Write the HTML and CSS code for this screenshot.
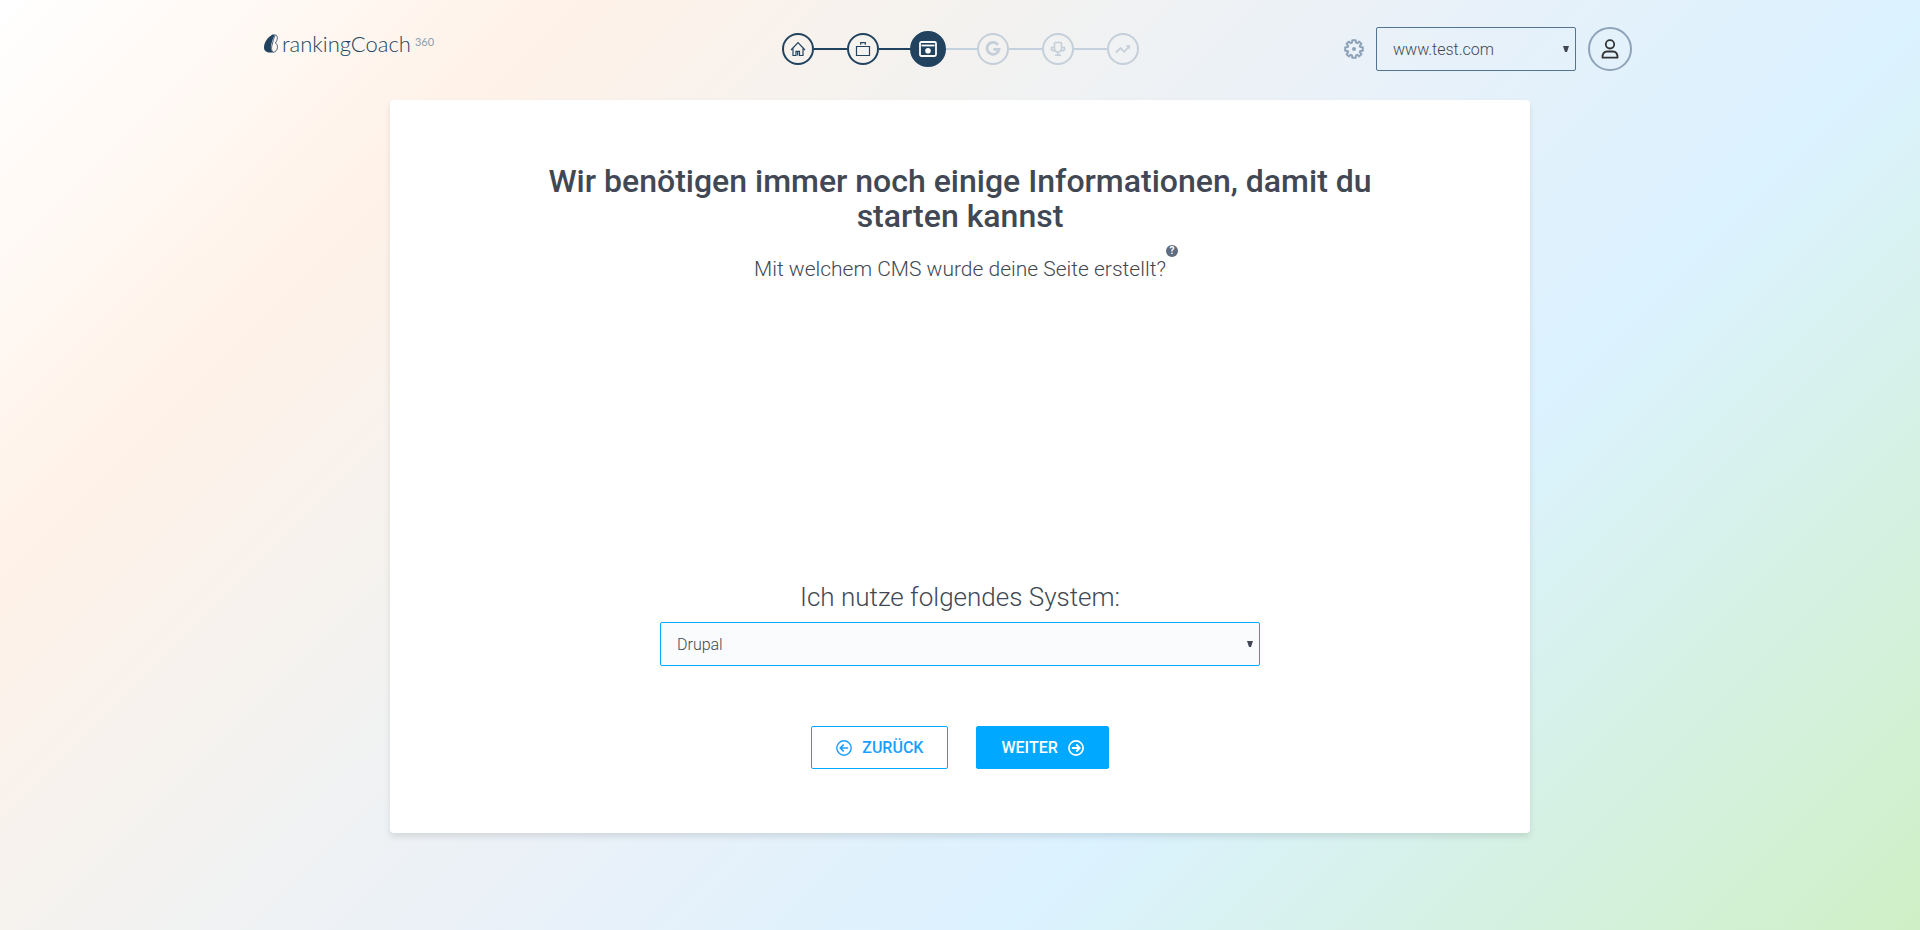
FILE: index.html
```html
<!DOCTYPE html>
<html lang="de">
<head>
<meta charset="utf-8">
<meta name="viewport" content="width=device-width, initial-scale=1">
<title>rankingCoach 360</title>
<link rel="stylesheet" href="styles.css">
</head>
<body>
<header class="header">
  <a class="logo" href="#" aria-label="rankingCoach 360">
    <svg class="logo-mark" viewBox="0 0 14 19" aria-hidden="true">
      <path d="M8.500.5C3.500 3.500 0 8.500 0 13.500 0 17 2.500 18.500 6 18.500h3C6.800 16.500 6.500 13.500 7.300 10.500 8 7.500 9.500 3 11 .5z" fill="#22435f"/>
      <path d="M11.500.8c2.600 1.200 2.400 5-.2 8.200 3.200 1 3.200 8.700-2.300 9.300-2-2-1.600-5.400-.7-8C9 7.500 10 3 11.500.8z" fill="none" stroke="#22435f" stroke-width=".8"/>
    </svg>
    <span class="logo-name">rankingCoach</span><span class="logo-suffix">360</span>
  </a>

  <ol class="steps">
    <li class="step step-done"><a class="step-dot" href="#" aria-label="Website">
      <svg class="step-icon" viewBox="0 0 16 16" fill="none" stroke="currentColor" stroke-width="1.200" aria-hidden="true"><path d="M1 9 8 1.700 15 9M3 7.500V14.500H6V10.300h3.500V14.500H13V7.500M7.700 10.500v4"/></svg></a></li>
    <li class="step step-done"><a class="step-dot" href="#" aria-label="Unternehmen">
      <svg class="step-icon" viewBox="0 0 16 16" fill="none" stroke="currentColor" stroke-width="1.200" aria-hidden="true"><path d="M1.500 5.500h13v9h-13zM5.700 3.700V1.700h4.600v2"/></svg></a></li>
    <li class="step step-current"><a class="step-dot" href="#" aria-current="step" aria-label="CMS">
      <svg class="step-icon step-icon-large" viewBox="0 0 18 16" fill="none" stroke="currentColor" stroke-width="1.800" aria-hidden="true"><rect x="1" y="1" width="16" height="14" rx="1.500"/><path d="M2.500 4.500h13"/><circle cx="9" cy="9.700" r="2.800" fill="currentColor" stroke="none"/></svg></a></li>
    <li class="step"><a class="step-dot" href="#" aria-label="Google">
      <svg class="step-icon" viewBox="0 0 16 16" fill="none" stroke="currentColor" stroke-width="2.800" aria-hidden="true"><path d="M13 3.900A6 6 0 1 0 14 8.300H8.300"/></svg></a></li>
    <li class="step"><a class="step-dot" href="#" aria-label="Wettbewerber">
      <svg class="step-icon" viewBox="0 0 16 16" fill="none" stroke="currentColor" stroke-width="1.600" aria-hidden="true"><path d="M4.500 2.500c0-.8.300-1 1-1h5c.7 0 1 .2 1 1v6L9.500 11h-3l-2-2.500zM4.500 6.500h-3v2.200l1.500 1h2.500M11.500 6.500h3v2.200l-1.500 1h-2.500M8 11v3M5 14.200h6"/></svg></a></li>
    <li class="step"><a class="step-dot" href="#" aria-label="Ranking">
      <svg class="step-icon" viewBox="0 0 16 16" fill="none" stroke="currentColor" stroke-width="1.800" aria-hidden="true"><path d="M1 11.500 5.500 7 9.300 10.800 14 5.500"/><path d="M10.500 4.300H15V8.800z" fill="currentColor" stroke="none"/></svg></a></li>
  </ol>

  <div class="account">
    <button class="icon-button" type="button" aria-label="Einstellungen">
      <svg class="gear" viewBox="0 0 20 20" fill="none" stroke="currentColor" stroke-width="2" stroke-linejoin="round" aria-hidden="true"><path d="M8.300 1.200h3.400l.3 2.500 1.200.5 2-1.600 2.200 2.200-1.600 2 .5 1.200 2.500.3v3.400l-2.500.3-.5 1.200 1.600 2-2.200 2.200-2-1.600-1.200.5-.3 2.500H8.300L8 16.300l-1.200-.5-2 1.600-2.200-2.200 1.600-2-.5-1.200-2.500-.3V8.300L3.700 8l.5-1.200-1.600-2 2.200-2.200 2 1.600L8 3.700z"/><circle cx="10" cy="10" r="2" fill="currentColor" stroke="none"/></svg>
    </button>
    <div class="select-box">
      <select class="select select-site" aria-label="Website auswählen"><option>www.test.com</option></select>
      <svg class="arrow" viewBox="0 0 6 6" aria-hidden="true"><path d="M0 0h6L4 6H2z"/></svg>
    </div>
    <button class="avatar" type="button" aria-label="Profil">
      <svg class="avatar-icon" viewBox="0 0 18 20" fill="none" stroke="currentColor" stroke-width="1.800" aria-hidden="true"><circle cx="9" cy="5.300" r="4.200"/><path d="M1.500 18.700c-.2-4 1.500-6.200 4.700-6.200h5.600c3.200 0 4.900 2.200 4.700 6.200z" stroke-linejoin="round"/></svg>
    </button>
  </div>
</header>

<main class="card">
  <h1 class="title">Wir benötigen immer noch einige Informationen, damit du starten kannst</h1>
  <p class="subtitle">Mit welchem CMS wurde deine Seite erstellt?<button class="help" type="button" aria-label="Hilfe">?</button></p>
  <form class="form">
    <label class="label" for="cms">Ich nutze folgendes System:</label>
    <div class="select-box">
      <select class="select select-cms" id="cms"><option>Drupal</option></select>
      <svg class="arrow" viewBox="0 0 6 6" aria-hidden="true"><path d="M0 0h6L4 6H2z"/></svg>
    </div>
    <div class="actions">
      <button class="button" type="button"><svg class="button-icon" viewBox="0 0 16 16" fill="none" stroke="currentColor" stroke-width="1.400" aria-hidden="true"><circle cx="8" cy="8" r="7.200"/><path d="M12.200 8H4.500M7.700 4.500 4.300 8l3.400 3.500" stroke-width="1.700"/></svg>Zurück</button>
      <button class="button button-primary" type="button">Weiter<svg class="button-icon" viewBox="0 0 16 16" fill="none" stroke="currentColor" stroke-width="1.700" aria-hidden="true"><circle cx="8" cy="8" r="7.100"/><path d="M3.800 8h7.700M8.300 4.500 11.700 8l-3.400 3.500" stroke-width="1.900"/></svg></button>
    </div>
  </form>
</main>
</body>
</html>
```
FILE: styles.css
```css
* {
  box-sizing: border-box;
}

body {
  margin: 0;
  min-height: 100vh;
  background: linear-gradient(135deg, #fff 0%, #fff2e8 20%, #f4f2ef 34%, #e9f1f9 51%, #dbf2ff 68%, #cff0c6 100%);
  color: #414853;
  font-family: Roboto, "Liberation Sans", sans-serif;
  font-weight: 300;
}

.header {
  display: grid;
  grid-template-columns: 1fr auto 1fr;
  max-width: 1400px;
  height: 100px;
  margin: 0 auto;
}

.logo {
  display: flex;
  align-items: flex-start;
  padding: 32px 0 0 4px;
  color: #22435f;
  font-family: Lato, sans-serif;
  line-height: 24px;
  text-decoration: none;
}

.logo-mark {
  width: 14px;
  height: 19px;
  margin: 2px 4px 0 0;
}

.logo-name {
  font-size: 22px;
  font-weight: 300;
}

.logo-suffix {
  margin-left: 4px;
  color: #8b9bab;
  font-size: 11px;
  font-weight: 400;
  line-height: 20px;
}

.steps {
  display: flex;
  align-items: center;
  height: 98px;
  margin: 0;
  padding: 0;
  list-style: none;
  color: #c5cfda;
}

.step {
  display: flex;
  align-items: center;
}

.step + .step::before {
  content: "";
  width: 33px;
  height: 2px;
  background: #c3d0dd;
}

.step-dot {
  display: flex;
  align-items: center;
  justify-content: center;
  width: 32px;
  height: 32px;
  border: 2px solid currentColor;
  border-radius: 50%;
  color: inherit;
}

.step-icon {
  width: 16px;
  height: 16px;
}

.step-icon-large {
  width: 18px;
}

.step-done,
.step-current {
  color: #22435f;
}

.step + .step-done::before,
.step + .step-current::before {
  background: #22435f;
}

.step-current {
  position: relative;
  z-index: 1;
}

.step-current .step-dot {
  width: 36px;
  height: 36px;
  margin: 0 -2px;
  border-color: #22435f;
  background: #22435f;
  color: #fff;
}

.account {
  display: flex;
  align-items: center;
  justify-content: flex-end;
  gap: 12px;
  height: 98px;
  padding-right: 28px;
}

.icon-button {
  padding: 0;
  border: 0;
  background: none;
  color: #8fa3b8;
}

.gear {
  display: block;
  width: 20px;
  height: 20px;
}

.select-box {
  position: relative;
}

.select {
  display: block;
  height: 44px;
  padding: 0 16px;
  border: 1px solid #00a8ff;
  border-radius: 2px;
  background: #fafbfd;
  color: inherit;
  font: inherit;
  font-size: 16px;
  appearance: none;
}

.select-site {
  width: 200px;
  border-color: #537491;
  background: transparent;
}

.select-cms {
  width: 100%;
}

.arrow {
  position: absolute;
  top: 19px;
  right: 7px;
  width: 6px;
  height: 6px;
  fill: #414853;
  pointer-events: none;
}

.avatar {
  display: flex;
  align-items: center;
  justify-content: center;
  width: 44px;
  height: 44px;
  padding: 0;
  border: 2px solid #8fa3b8;
  border-radius: 50%;
  background: none;
  color: #333;
}

.avatar-icon {
  width: 18px;
  height: 20px;
}

.card {
  display: flex;
  flex-direction: column;
  align-items: center;
  max-width: 1140px;
  margin: 0 auto;
  padding: 64px 24px;
  border-radius: 4px;
  background: #fff;
  box-shadow: 0 4px 6px rgba(0, 0, 0, 0.1);
}

.title {
  max-width: 860px;
  margin: 0;
  font-size: 32px;
  font-weight: 500;
  line-height: 35px;
  text-align: center;
}

.subtitle {
  display: flex;
  align-items: flex-start;
  margin: 11px 0 0;
  font-size: 21px;
  line-height: 48px;
}

.help {
  width: 12px;
  height: 12px;
  margin-right: -12px;
  padding: 0;
  border: 0;
  border-radius: 50%;
  background: #5f6b7f;
  color: #fff;
  font: bold 10px/12px Roboto, sans-serif;
}

.form {
  width: 100%;
  max-width: 600px;
  margin-top: 285px;
}

.label {
  display: block;
  padding-bottom: 6px;
  font-size: 26px;
  line-height: 38px;
  text-align: center;
}

.actions {
  display: flex;
  justify-content: center;
  gap: 28px;
  margin-top: 60px;
}

.button {
  display: flex;
  align-items: center;
  gap: 10px;
  height: 43px;
  padding: 0 24px;
  border: 1px solid #00a8ff;
  border-radius: 2px;
  background: #fff;
  color: #1a9fff;
  font: inherit;
  font-size: 16px;
  font-weight: 500;
  text-transform: uppercase;
}

.button-primary {
  background: #00a8ff;
  color: #fff;
}

.button-icon {
  width: 16px;
  height: 16px;
}
```
